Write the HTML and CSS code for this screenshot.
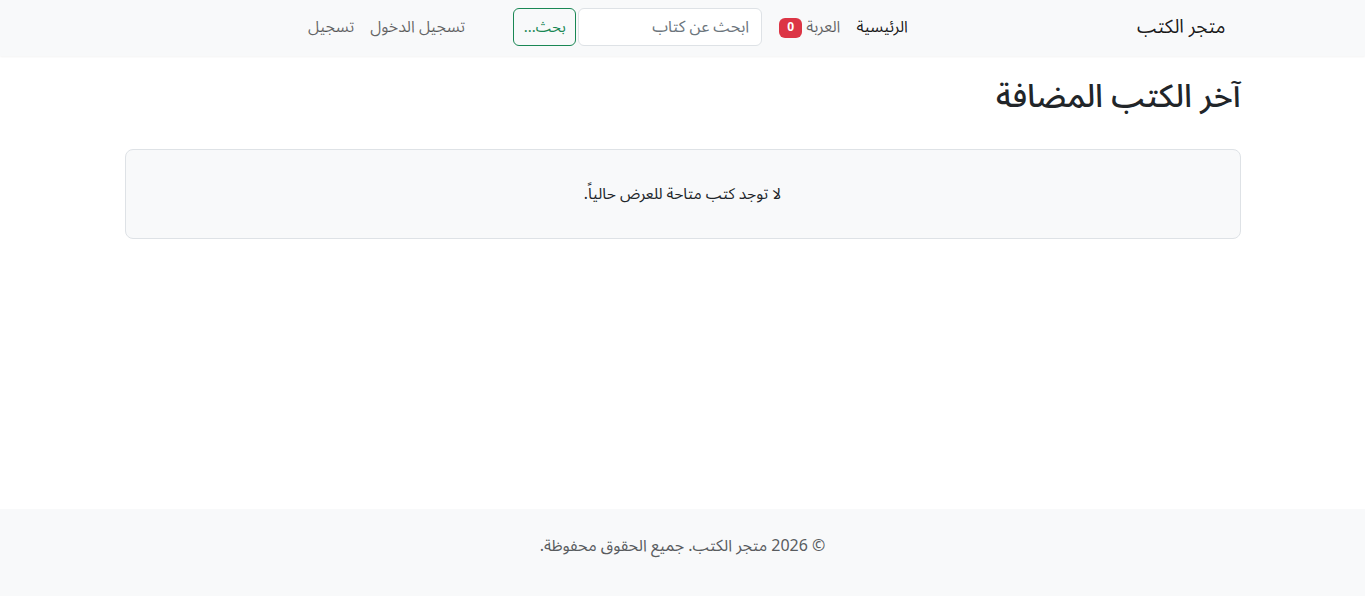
FILE: index.html
```html
<!DOCTYPE html>
<html lang="ar" dir="rtl">
<head>
<meta charset="utf-8">
<title>متجر الكتب</title>
<link rel="stylesheet" href="styles.css">
</head>
<body>
<nav class="navbar">
  <div class="nav-inner">
    <a class="brand" href="#">متجر الكتب</a>
    <ul class="nav-main">
      <li><a class="nav-link active" href="#">الرئيسية</a></li>
      <li><a class="nav-link" href="#">العربة <span class="badge">0</span></a></li>
    </ul>
    <form class="search">
      <input class="search-input" type="search" placeholder="ابحث عن كتاب">
      <button class="search-btn" type="button">بحث...</button>
    </form>
    <ul class="nav-auth">
      <li><a class="nav-link" href="#">تسجيل الدخول</a></li>
      <li><a class="nav-link" href="#">تسجيل</a></li>
    </ul>
  </div>
</nav>
<main class="container">
  <h2 class="title">آخر الكتب المضافة</h2>
  <div class="empty">
    <p>لا توجد كتب متاحة للعرض حالياً.</p>
  </div>
</main>
<footer class="footer">
  <p>© 2026 متجر الكتب. جميع الحقوق محفوظة.</p>
</footer>
</body>
</html>
```
FILE: styles.css
```css
* { box-sizing: border-box; }
html, body { margin: 0; padding: 0; }
body {
  font-family: "Noto Sans Arabic", "DejaVu Sans", sans-serif;
  font-size: 16px;
  line-height: 24px;
  color: #212529;
  background: #fff;
  min-height: 100vh;
  display: flex;
  flex-direction: column;
}
a { text-decoration: none; }
ul { list-style: none; margin: 0; padding: 0; }

.navbar {
  background: #f8f9fa;
  height: 56px;
  flex-shrink: 0;
  box-shadow: 0 1px 2px rgba(0,0,0,.05);
}
.nav-inner {
  width: 1116px;
  margin: 0 auto;
  height: 100%;
  display: flex;
  align-items: center;
  padding-right: 15px;
  padding-bottom: 3px;
}
.brand {
  font-size: 19px;
  line-height: 28px;
  color: rgba(0,0,0,.9);
  margin-left: 221px;
  white-space: nowrap;
}
.nav-main, .nav-auth { display: flex; }
.nav-link {
  display: block;
  padding: 8px;
  color: rgba(0,0,0,.6);
  font-size: 16px;
  line-height: 24px;
  white-space: nowrap;
}
.nav-link.active { color: rgba(0,0,0,.9); }
.badge {
  display: inline-block;
  background: #dc3545;
  color: #fff;
  font-size: 12px;
  font-weight: 700;
  line-height: 1;
  padding: 4px 8px;
  border-radius: 6px;
  vertical-align: 1px;
}
.search {
  display: flex;
  margin-right: 9px;
}
.search-input {
  width: 184px;
  height: 38px;
  border: 1px solid #dee2e6;
  border-radius: 6px;
  padding: 6px 12px;
  font: inherit;
  background: #fff;
  margin-left: 2px;
}
.search-input::placeholder { color: #6c757d; }
.search-btn {
  width: 63px;
  height: 38px;
  border: 1px solid #198754;
  border-radius: 6px;
  background: transparent;
  color: #198754;
  font: inherit;
  font-size: 15px;
  padding: 6px 4px;
}
.nav-auth { margin-right: 40px; }

.container {
  width: 1116px;
  margin: 0 auto;
}
.title {
  font-size: 32px;
  font-weight: 500;
  line-height: 38px;
  margin: 22px 0 33px;
}
.empty {
  background: #f8f9fa;
  border: 1px solid #dee2e6;
  border-radius: 8px;
  padding: 32px;
  text-align: center;
}
.empty p { margin: 0; font-size: 15.5px; line-height: 24px; }

.footer {
  margin-top: auto;
  flex-shrink: 0;
  background: #f8f9fa;
  padding: 25px 0 38px;
  text-align: center;
  color: #595c5f;
}
.footer p { margin: 0; font-size: 16px; line-height: 24px; }
```
